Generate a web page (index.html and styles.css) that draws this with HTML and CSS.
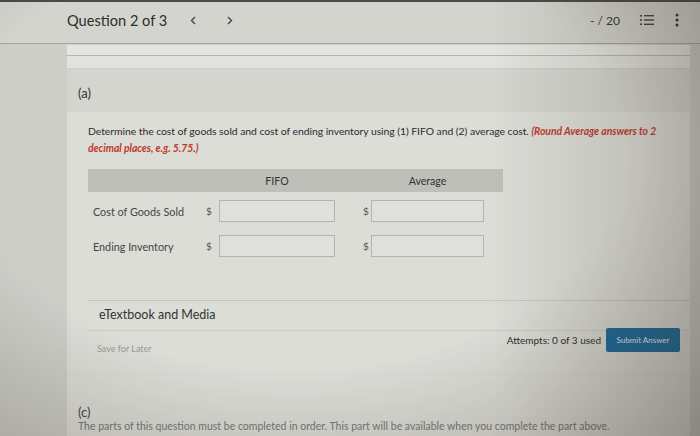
FILE: index.html
```html
<!DOCTYPE html>
<html>
<head>
<meta charset="utf-8">
<link rel="stylesheet" href="styles.css">
</head>
<body>
<div class="topbar">
  <div class="title">Question 2 of 3</div>
  <svg class="chev prev" width="6" height="9" viewBox="0 0 6 9"><path d="M5 1 L1.5 4.5 L5 8" fill="none" stroke="#444" stroke-width="1.4"/></svg>
  <svg class="chev next" width="6" height="9" viewBox="0 0 6 9"><path d="M1 1 L4.5 4.5 L1 8" fill="none" stroke="#444" stroke-width="1.4"/></svg>
  <div class="spacer"></div>
  <div class="score">- / 20</div>
  <svg class="listicon" width="14" height="12" viewBox="0 0 14 12"><g fill="#444"><rect x="0" y="1" width="2" height="1.6"/><rect x="0" y="5.2" width="2" height="1.6"/><rect x="0" y="9.4" width="2" height="1.6"/><rect x="4" y="1" width="10" height="1.4"/><rect x="4" y="5.3" width="10" height="1.4"/><rect x="4" y="9.6" width="10" height="1.4"/></g></svg>
  <svg class="kebab" width="4" height="14" viewBox="0 0 4 14"><g fill="#333"><circle cx="2" cy="2" r="1.5"/><circle cx="2" cy="7" r="1.5"/><circle cx="2" cy="12" r="1.5"/></g></svg>
</div>
<div class="main">
  <div class="strip strip1"></div>
  <div class="strip strip2"></div>
  <div class="panel">
    <div class="panel-head">(a)</div>
    <div class="panel-body">
      <p class="question"><span>Determine the cost of goods sold and cost of ending inventory using (1) FIFO and (2) average cost.</span> <em>(Round Average answers to 2 decimal places, e.g. 5.75.)</em></p>
      <div class="table">
        <div class="thead">
          <div></div><div></div><div class="th">FIFO</div><div></div><div></div><div class="th">Average</div><div></div>
        </div>
        <div class="row">
          <div class="label">Cost of Goods Sold</div><div class="dollar">$</div><div class="input"></div><div></div><div class="dollar">$</div><div class="input"></div><div></div>
        </div>
        <div class="row">
          <div class="label">Ending Inventory</div><div class="dollar">$</div><div class="input"></div><div></div><div class="dollar">$</div><div class="input"></div><div></div>
        </div>
      </div>
      <div class="etext">eTextbook and Media</div>
      <div class="footer">
        <div class="save">Save for Later</div>
        <div class="attempts">Attempts: 0 of 3 used</div>
        <div class="submit">Submit Answer</div>
      </div>
    </div>
    <div class="part-c">
      <div class="c-label">(c)</div>
      <div class="c-text">The parts of this question must be completed in order. This part will be available when you complete the part above.</div>
    </div>
  </div>
</div>
<div class="vignette"></div>
</body>
</html>
```
FILE: styles.css
```css
html, body {
  margin: 0;
  padding: 0;
  height: 100%;
  overflow: hidden;
}
body {
  background: #cdcec8;
  font-family: Lato, "Open Sans", sans-serif;
  color: #333;
}
.topbar {
  height: 36px;
  border-top: 2px solid #4a4a46;
  background: #d3d4ce;
  border-bottom: 1px solid #a6a7a1;
  display: flex;
  align-items: center;
  padding-left: 67px;
  padding-right: 20px;
  padding-bottom: 5px;
}
.title {
  font-size: 14.6px;
  color: #2e2e2e;
  width: 123px;
}
.prev { margin-right: 31px; }
.spacer { flex: 1; }
.score {
  font-size: 12px;
  color: #333;
  margin-right: 20px;
}
.listicon { margin-right: 21px; }
.kebab { margin-right: 1px; }
.main {
  padding-left: 67px;
  padding-right: 10px;
}
.strip1 {
  margin-top: 1px;
  height: 10px;
  background: #e4e5e0;
  border-bottom: 1px solid #b6b7b1;
}
.strip2 {
  height: 12px;
  background: #e1e2dd;
}
.panel {
  margin-top: 1px;
  background: #dcddd7;
}
.panel-head {
  height: 43px;
  background: #d4d5cf;
  padding-left: 11px;
  font-size: 13px;
  display: flex;
  align-items: center;
  padding-top: 5px;
  box-sizing: border-box;
  color: #333;
}
.panel-body {
  padding: 11px 0 20px 21px;
}
.question {
  margin: 0;
  font-size: 10.4px;
  letter-spacing: -0.05px;
  line-height: 17px;
  width: 575px;
  color: #2c2c2c;
}
.question em {
  color: #c0392b;
  font-weight: 700;
  font-style: italic;
}
.table {
  margin-top: 12px;
}
.thead, .row {
  display: grid;
  grid-template-columns: 117px 14px 116px 27px 9px 113px 19px;
  width: 415px;
}
.thead {
  height: 23px;
  background: #bebfb9;
  align-items: center;
}
.th {
  text-align: center;
  font-size: 10.6px;
  color: #333;
}
.row {
  height: 22px;
  align-items: center;
  margin-top: 8px;
}
.row + .row { margin-top: 13px; }
.label {
  font-size: 10.8px;
  padding-left: 5px;
  color: #444;
}
.dollar {
  font-size: 10px;
  color: #555;
  padding-left: 1px;
}
.input {
  height: 22px;
  box-sizing: border-box;
  border: 1px solid #b3b4ae;
  background: #dfe0db;
}
.etext {
  margin-top: 43px;
  border-top: 1px solid #c4c5bf;
  border-bottom: 1px solid #cdcec8;
  padding: 6px 0 8px 11px;
  font-size: 12.5px;
  color: #333;
}
.footer {
  display: flex;
  align-items: center;
  margin-top: -6px;
  padding-right: 10px;
}
.save {
  font-size: 9px;
  color: #9a9a96;
  padding-left: 9px;
  margin-top: 18px;
  flex: 1;
}
.attempts {
  font-size: 10px;
  color: #2e2e2e;
  margin-right: 5px;
}
.submit {
  background: #1b6c9e;
  color: #e8eef2;
  font-size: 8px;
  width: 74px;
  height: 24px;
  display: flex;
  align-items: center;
  justify-content: center;
  border-radius: 2px;
}
.part-c {
  padding-left: 11px;
  padding-top: 29px;
  padding-bottom: 10px;
  border-top: 1px solid #d6d7d1;
}
.c-label {
  font-size: 13px;
  color: #444;
}
.c-text {
  font-size: 10.5px;
  color: #777;
  margin-top: 0;
  white-space: nowrap;
}
.vignette {
  position: fixed;
  inset: 0;
  pointer-events: none;
  background:
    radial-gradient(ellipse 85% 90% at 42% 35%, rgba(0,0,0,0) 55%, rgba(50,40,30,0.28) 100%),
    linear-gradient(to right, rgba(0,0,0,0) 70%, rgba(60,50,40,0.22) 100%);
}
```
